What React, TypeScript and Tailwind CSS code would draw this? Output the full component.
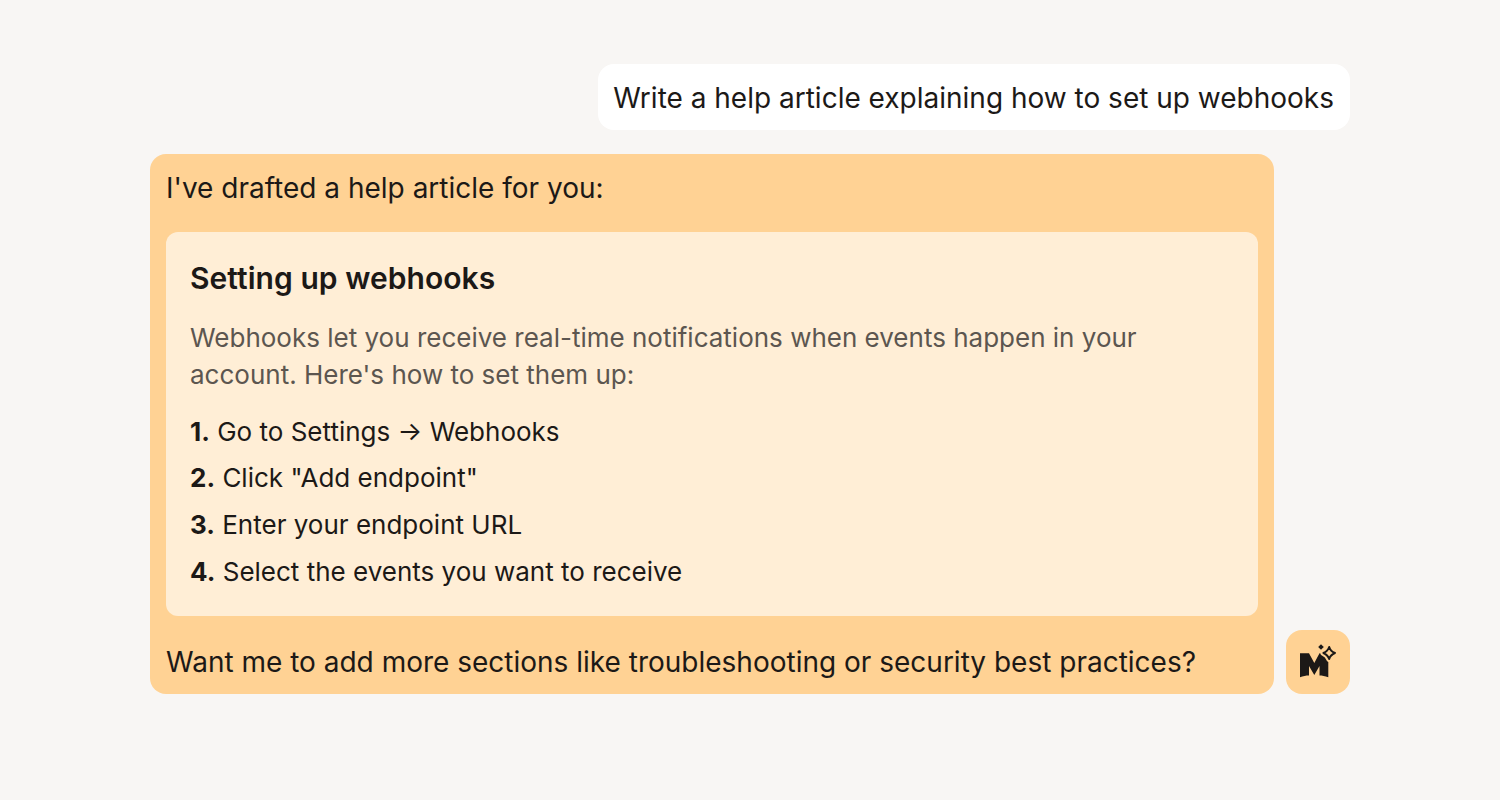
const steps = [
  ["1.", "Go to Settings → Webhooks"],
  ["2.", 'Click "Add endpoint"'],
  ["3.", "Enter your endpoint URL"],
  ["4.", "Select the events you want to receive"],
];

const STAR = "M43.2 17C44 20 45.4 21.6 49 23C45.4 24.4 44 26 43.2 29C42.2 26 40.8 24.4 37.4 23C40.8 21.6 42.2 20 43.2 17Z";

const MagicLogo = () => (
  <svg width="64" height="64" viewBox="0 0 64 64" fill="none">
    <path
      d="M14 47.3V23.3H23L28.3 33L33.5 23.3H42.3V47.3C39 46 36 45.5 33.5 45.5V36L28.3 45L23 36V45.5C20 45.5 17 46 14 47.3Z"
      fill="#1c1917"
    />
    {/* gap between the M and the sparkle */}
    <path d={STAR} fill="#ffd294" stroke="#ffd294" strokeWidth="6" strokeLinejoin="round" />
    <path d="M35 14.2L37.8 17L35 19.8L32.2 17Z" fill="#1c1917" />
    <path d={STAR} stroke="#1c1917" strokeWidth="2" strokeLinejoin="round" />
  </svg>
);

export default function App() {
  return (
    <div className="min-h-screen bg-[#f8f6f4] px-[150px] pt-16 font-['Inter',sans-serif] text-[#1c1917]">
      <div className="flex justify-end">
        <div className="rounded-2xl bg-white pb-[15px] pl-[15px] pr-4 pt-[18px] text-[28px] leading-[33px]">
          Write a help article explaining how to set up webhooks
        </div>
      </div>

      <div className="mt-6 flex items-end gap-3">
        <div className="flex-1 rounded-2xl bg-[#ffd294] px-4 pb-[15px] pt-[18px] text-[28px] leading-[33px]">
          <p>I've drafted a help article for you:</p>

          <div className="mb-[30px] mt-[27px] rounded-xl bg-[#ffeed6] px-6 pb-[26px] pt-[25px]">
            <h3 className="text-[30px] font-semibold leading-[42px] tracking-[0.05px]">Setting up webhooks</h3>
            <p className="mt-5 text-[26px] leading-[37px] text-[#5c5650]">
              Webhooks let you receive real-time notifications when events happen in your account.
              Here's how to set them up:
            </p>
            <div className="mt-[19.7px] flex flex-col gap-[9.67px] text-[26px] leading-[37px]">
              {steps.map(([num, label]) => (
                <div key={num}>
                  <span className="font-bold">{num}</span> {label}
                </div>
              ))}
            </div>
          </div>

          <p>Want me to add more sections like troubleshooting or security best practices?</p>
        </div>

        <div className="flex h-16 w-16 shrink-0 items-center justify-center rounded-2xl bg-[#ffd294]">
          <MagicLogo />
        </div>
      </div>
    </div>
  );
}
